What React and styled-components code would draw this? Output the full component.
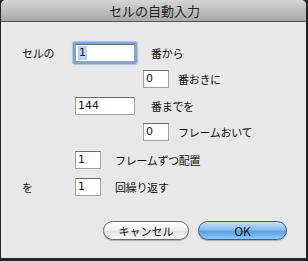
import React from "react";
import styled, { createGlobalStyle } from "styled-components";

const GlobalStyle = createGlobalStyle`
  html, body {
    margin: 0;
    padding: 0;
    background: #262626;
  }
  body {
    width: 308px;
    height: 261px;
    overflow: hidden;
    font-family: "DejaVu Sans", "Noto Sans CJK JP", sans-serif;
  }
`;

const Window = styled.div`
  width: 305px;
  height: 258px;
  margin-left: 1px;
  background: #e8e8e8;
  border-radius: 5px 5px 0 0;
  overflow: hidden;
  display: flex;
  flex-direction: column;
`;

const TitleBar = styled.div`
  height: 21px;
  border-bottom: 1px solid #555;
  background: linear-gradient(#d6d6d6, #a8a8a8);
  display: flex;
  justify-content: center;
  align-items: center;
  font-family: "Noto Sans CJK JP", sans-serif;
  font-size: 13px;
  color: #222;
  padding-left: 2px;
`;

const Content = styled.div`
  display: flex;
  flex-direction: column;
  padding: 22px 19px 0 21px;
`;

const Row = styled.div`
  display: flex;
  align-items: center;
  height: 18px;
  margin-top: ${(p) => p.$top || 0}px;
`;

const Label = styled.div`
  width: 53px;
  font-family: "Noto Sans CJK JP", sans-serif;
  font-size: 11px;
  letter-spacing: -0.3px;
  color: #111;
`;

const Spacer = styled.div`
  width: 53px;
`;

const Field = styled.div`
  box-sizing: border-box;
  width: ${(p) => (p.$wide ? 60 : 26)}px;
  height: 18px;
  margin-left: ${(p) => p.$indent || 0}px;
  background: #fff;
  border: 1px solid #a0a0a0;
  border-top-color: #6e6e6e;
  padding-left: 2px;
  font-size: 11px;
  line-height: 16px;
  color: #111;
  border-radius: ${(p) => (p.$focus ? 1 : 0)}px;
  box-shadow: ${(p) =>
    p.$focus ? "0 0 0 2px #7aa3d8, 0 0 1px 3px #a9c3e6" : "none"};
`;

const Selected = styled.span`
  display: inline-block;
  height: 14px;
  line-height: 14px;
  margin-top: 1px;
  background: #b5d3f7;
  padding: 0 1px;
`;

const Text = styled.div`
  margin-left: ${(p) => p.$gap}px;
  font-family: "Noto Sans CJK JP", sans-serif;
  font-size: 11px;
  letter-spacing: -0.3px;
  color: #111;
`;

const Buttons = styled.div`
  display: flex;
  justify-content: flex-end;
  gap: 9px;
  margin-top: 25px;
`;

const Button = styled.div`
  box-sizing: border-box;
  width: ${(p) => p.$w}px;
  height: 19px;
  border-radius: 10px;
  display: flex;
  align-items: center;
  justify-content: center;
  font-family: "Noto Sans CJK JP", "DejaVu Sans", sans-serif;
  font-size: ${(p) => (p.$primary ? 12 : 11)}px;
  color: #111;
  border: 1px solid ${(p) => (p.$primary ? "#3d5d93" : "#6a6a6a")};
  background: ${(p) =>
    p.$primary
      ? "linear-gradient(#c4def8 0%, #8bbcf0 45%, #5a9fe6 55%, #8ccaf7 100%)"
      : "linear-gradient(#ffffff 0%, #f2f2f2 45%, #e2e2e2 55%, #f8f8f8 100%)"};
  box-shadow: 0 1px 1px rgba(0, 0, 0, 0.25);
`;

export default function App() {
  return (
    <>
      <GlobalStyle />
      <Window>
        <TitleBar>セルの自動入力</TitleBar>
        <Content>
          <Row>
            <Label>セルの</Label>
            <Field $wide $focus>
              <Selected>1</Selected>
            </Field>
            <Text $gap={16}>番から</Text>
          </Row>
          <Row $top={8}>
            <Spacer />
            <Field $indent={68}>0</Field>
            <Text $gap={9}>番おきに</Text>
          </Row>
          <Row $top={9}>
            <Spacer />
            <Field $wide>144</Field>
            <Text $gap={16}>番までを</Text>
          </Row>
          <Row $top={8}>
            <Spacer />
            <Field $indent={68}>0</Field>
            <Text $gap={9}>フレームおいて</Text>
          </Row>
          <Row $top={10}>
            <Spacer />
            <Field>1</Field>
            <Text $gap={14}>フレームずつ配置</Text>
          </Row>
          <Row $top={9}>
            <Label>を</Label>
            <Field>1</Field>
            <Text $gap={14}>回繰り返す</Text>
          </Row>
          <Buttons>
            <Button $w={86}>キャンセル</Button>
            <Button $w={89} $primary>OK</Button>
          </Buttons>
        </Content>
      </Window>
    </>
  );
}
